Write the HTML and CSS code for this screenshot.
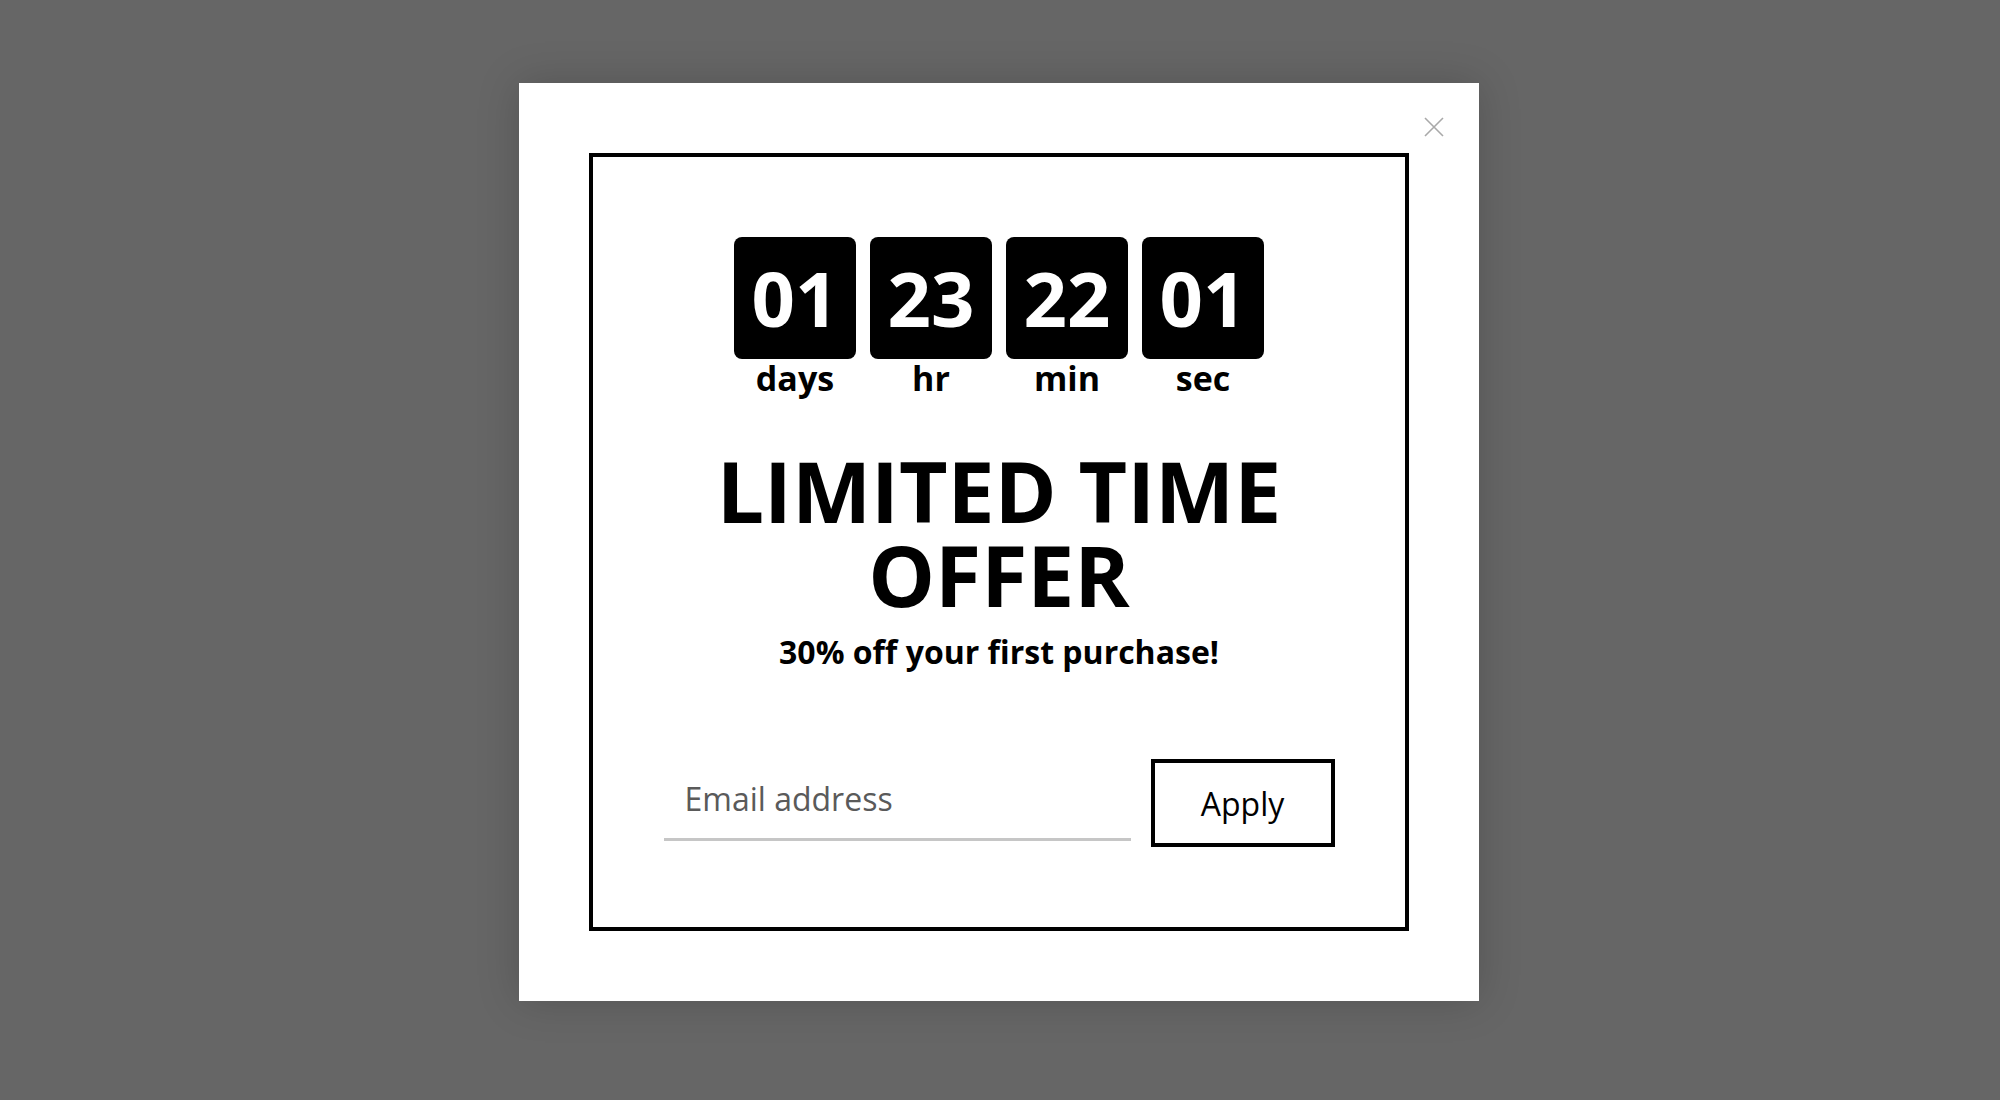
FILE: index.html
```html
<!DOCTYPE html>
<html lang="en">
<head>
<meta charset="utf-8">
<title>Limited Time Offer</title>
<link rel="stylesheet" href="styles.css">
</head>
<body>
<div class="overlay">
  <div class="modal">
    <button class="close" aria-label="Close">
      <svg width="20" height="20" viewBox="0 0 20 20"><path d="M1 1L19 19M19 1L1 19" stroke="#a9a9a9" stroke-width="1.6" fill="none"/></svg>
    </button>
    <div class="frame">
      <div class="countdown">
        <div class="unit"><div class="digits">01</div><div class="label">days</div></div>
        <div class="unit"><div class="digits">23</div><div class="label">hr</div></div>
        <div class="unit"><div class="digits">22</div><div class="label">min</div></div>
        <div class="unit"><div class="digits">01</div><div class="label">sec</div></div>
      </div>
      <h1 class="title">LIMITED TIME<br>OFFER</h1>
      <p class="subtitle">30% off your first purchase!</p>
      <form class="signup">
        <input class="email" type="email" placeholder="Email address">
        <button class="apply" type="button">Apply</button>
      </form>
    </div>
  </div>
</div>
</body>
</html>
```

FILE: styles.css
```css
* { box-sizing: border-box; }
html, body { margin: 0; padding: 0; }
body {
  background: #666666;
  font-family: "Open Sans", "Noto Sans", sans-serif;
}
.overlay {
  height: 1100px;
  display: flex;
  justify-content: center;
  align-items: flex-start;
  padding-top: 83px;
  padding-right: 2px;
}
.modal {
  position: relative;
  width: 960px;
  background: #ffffff;
  padding: 70px;
  box-shadow: 0 0 40px rgba(0, 0, 0, 0.18);
}
.close {
  position: absolute;
  top: 34px;
  right: 35px;
  width: 20px;
  height: 20px;
  padding: 0;
  border: 0;
  background: transparent;
  display: block;
}
.close svg { display: block; }
.frame {
  border: 4px solid #000;
  padding: 80px 0 80px;
  display: flex;
  flex-direction: column;
  align-items: center;
}
.countdown {
  display: flex;
  gap: 14px;
}
.unit {
  display: flex;
  flex-direction: column;
  align-items: center;
  width: 122px;
}
.digits {
  width: 122px;
  height: 122px;
  background: #000;
  border-radius: 8px;
  color: #fff;
  font-weight: 700;
  font-size: 76px;
  line-height: 1;
  display: flex;
  align-items: center;
  justify-content: center;
}
.label {
  font-weight: 700;
  font-size: 34px;
  line-height: 34px;
  margin-top: 2px;
  color: #000;
}
.title {
  margin: 54px 0 0;
  font-weight: 700;
  font-size: 84px;
  line-height: 84px;
  text-align: center;
  color: #000;
}
.subtitle {
  margin: 19px 0 0;
  font-weight: 700;
  font-size: 32px;
  line-height: 32px;
  color: #000;
}
.signup {
  margin: 91px 0 0;
  display: flex;
  align-items: flex-start;
  gap: 20px;
}
.email {
  width: 467px;
  height: 82px;
  border: 0;
  border-bottom: 3px solid #c6c6c6;
  padding: 0 0 0 21px;
  font-family: "Open Sans", sans-serif;
  font-size: 32px;
  color: #333;
  background: transparent;
  outline: none;
}
.email::placeholder { color: #5a5a5a; }
.apply {
  width: 184px;
  height: 88px;
  border: 4px solid #000;
  background: #fff;
  font-family: "Open Sans", sans-serif;
  font-size: 32px;
  font-weight: 500;
  color: #000;
  padding: 0;
}
```
